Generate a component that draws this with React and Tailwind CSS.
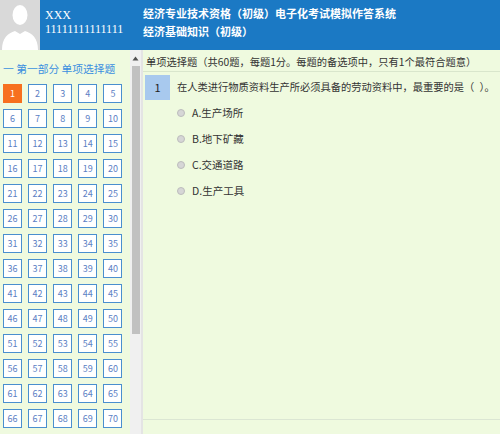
import React from "react";

const cjk = { fontFamily: '"Microsoft YaHei", "Noto Sans CJK SC", "Noto Sans", sans-serif' };

const options = ["A.生产场所", "B.地下矿藏", "C.交通道路", "D.生产工具"];

const Avatar = () => (
  <div className="w-[40px] h-[50px] shrink-0 bg-[#d9d9d9] overflow-hidden flex items-end justify-center">
    <svg width="40" height="50" viewBox="0 0 40 50">
      <ellipse cx="20" cy="15" rx="7.5" ry="10" fill="#ffffff" />
      <path d="M2 50 C2 38 8 33 15 31 L20 34 L25 31 C32 33 38 38 38 50 Z" fill="#ffffff" />
    </svg>
  </div>
);

const App = () => {
  const nums = Array.from({ length: 70 }, (_, i) => i + 1);

  return (
    <div className="w-[500px] h-[434px] overflow-hidden bg-[#effadf]" style={cjk}>
      {/* header */}
      <div className="flex h-[50px]">
        <Avatar />
        <div className="flex-1 flex bg-[#1b79c4] text-white">
          <div
            className="w-[103px] shrink-0 pl-[5px] pt-[8px] text-[12px] leading-[14px]"
            style={{ fontFamily: '"Liberation Serif", serif' }}
          >
            <div>XXX</div>
            <div>11111111111111</div>
          </div>
          <div className="pt-[4px] text-[11px] font-bold leading-[18px] whitespace-nowrap">
            <div>经济专业技术资格（初级）电子化考试模拟作答系统</div>
            <div>经济基础知识（初级）</div>
          </div>
        </div>
      </div>

      <div className="flex h-[384px]">
        {/* left nav */}
        <div className="w-[130px] shrink-0 pl-[3px] pt-[12px]">
          <div className="text-[10.75px] leading-[14px] text-[#3b8fe0] mb-[8px] whitespace-nowrap">一 第一部分 单项选择题</div>
          <div className="grid grid-cols-5 gap-x-[5.5px] gap-y-[6px] w-[120px]">
            {nums.map((n) => (
              <div
                key={n}
                className={
                  n === 1
                    ? "w-[19px] h-[19px] flex items-center justify-center text-[9px] bg-[#f7701f] text-white border border-[#f7701f]"
                    : "w-[19px] h-[19px] flex items-center justify-center text-[9px] bg-white text-[#5b80c4] border border-[#4a8fcf]"
                }
              >
                {n}
              </div>
            ))}
          </div>
        </div>

        {/* scrollbar */}
        <div className="w-[11px] shrink-0 bg-[#f0f0f0] flex flex-col items-center">
          <div className="h-[16px] flex items-center justify-center">
            <svg width="7" height="5" viewBox="0 0 7 5">
              <path d="M3.5 0.5 L6.5 4.5 L0.5 4.5 Z" fill="#505050" />
            </svg>
          </div>
          <div className="w-[8px] h-[268px] bg-[#c1c1c1]" />
        </div>
        <div className="w-[2px] shrink-0 bg-[#e4e4e4]" />

        {/* question panel */}
        <div className="flex-1 min-w-0 overflow-hidden flex flex-col">
          <div className="h-[22px] pl-[3px] pt-[5px] text-[10.25px] leading-[14px] text-[#333] border-b border-[#d9e6cc] whitespace-nowrap">
            单项选择题（共60题，每题1分。每题的备选项中，只有1个最符合题意）
          </div>
          <div className="flex mt-[3px] ml-[2px]">
            <div className="w-[25px] h-[25px] shrink-0 bg-[#a8c9ee] flex items-center justify-center text-[11px] text-[#222]">
              1
            </div>
            <div className="pl-[7px] pt-[5px] text-[10.25px] leading-[14px] text-[#333] whitespace-nowrap">
              在人类进行物质资料生产所必须具备的劳动资料中，最重要的是（{"\u2002"}）。
            </div>
          </div>
          <div className="flex flex-col gap-[12px] pl-[34px] pt-[6px]">
            {options.map((o) => (
              <div key={o} className="flex items-center h-[14px]">
                <span className="w-[8px] h-[8px] rounded-full bg-[#d6d6d6] border border-[#bcbcbc] mr-[7px]" />
                <span className="text-[10.5px] leading-[14px] text-[#333]">{o}</span>
              </div>
            ))}
          </div>
          <div className="mt-auto mb-[14px] border-t border-[#dbe6d3]" />
        </div>
      </div>
    </div>
  );
};

export default App;
